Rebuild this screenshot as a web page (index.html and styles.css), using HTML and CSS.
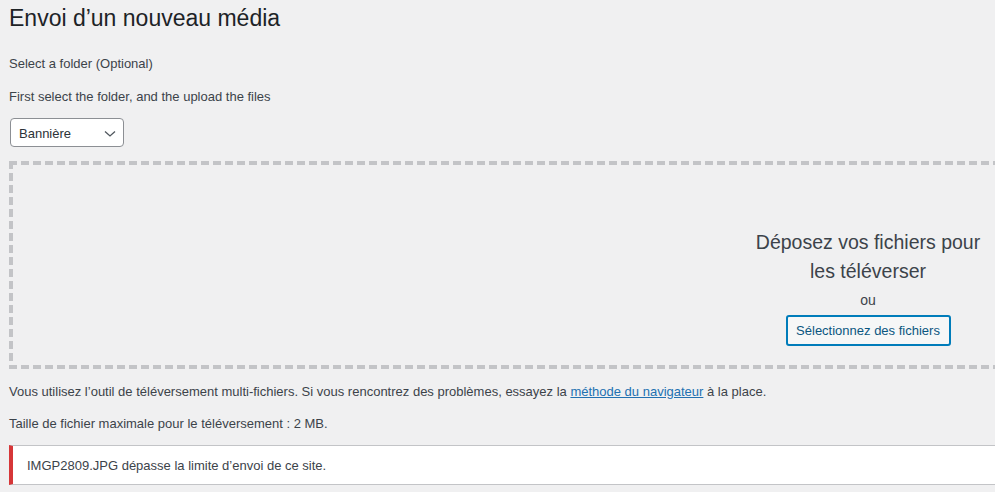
FILE: index.html
```html
<!DOCTYPE html>
<html lang="fr">
<head>
    <meta charset="UTF-8">
    <meta name="viewport" content="width=device-width, initial-scale=1.0">
    <title>Envoi d’un nouveau média</title>
    <link rel="stylesheet" href="styles.css">
</head>
<body>
    <div class="wrap">
        <h1>Envoi d’un nouveau média</h1>

        <p class="folder-label">Select a folder (Optional)</p>
        <p class="folder-help">First select the folder, and the upload the files</p>
        <div class="folder-select">
            <span>Bannière</span>
            <svg class="chevron" width="12" height="6" viewBox="0 0 12 6">
                <path d="M1 0.5 L6 5 L11 0.5" fill="none" stroke="#50575e" stroke-width="1.3"/>
            </svg>
        </div>

        <div class="drop-area">
            <div class="drop-inside">
                <p class="drop-info">Déposez vos fichiers pour les téléverser</p>
                <p class="drop-or">ou</p>
                <p class="drop-buttons"><button type="button" class="browse-button">Sélectionnez des fichiers</button></p>
            </div>
        </div>

        <p class="upload-flash">Vous utilisez l’outil de téléversement multi-fichiers. Si vous rencontrez des problèmes, essayez la <a href="#">méthode du navigateur</a> à la place.</p>
        <p class="max-size">Taille de fichier maximale pour le téléversement : 2 MB.</p>

        <div class="notice-error">IMGP2809.JPG dépasse la limite d’envoi de ce site.</div>
    </div>
</body>
</html>
```
FILE: styles.css
```css
html, body {
    overflow: hidden;
}
body {
    margin: 0;
    background-color: #f0f0f1;
    color: #3c434a;
    font-family: "Liberation Sans", Arial, sans-serif;
    font-size: 13px;
    line-height: 20px;
}
.wrap {
    padding-left: 9px;
    width: 1718px;
}
h1 {
    margin: 0;
    padding-top: 3px;
    font-size: 23px;
    font-weight: 400;
    line-height: 30px;
    color: #1d2327;
}
p {
    margin: 0;
}
.folder-label {
    margin-top: 21px;
}
.folder-help {
    margin-top: 13px;
}
.folder-select {
    display: flex;
    align-items: center;
    justify-content: space-between;
    box-sizing: border-box;
    width: 114px;
    height: 29px;
    margin: 11px 0 0 1px;
    padding: 2px 7px 0 8px;
    background-color: #fff;
    border: 1px solid #8c8f94;
    border-radius: 4px;
    color: #2c3338;
}

/* zone de glisser-déposer */
.drop-area {
    box-sizing: border-box;
    height: 208px;
    margin-top: 14px;
    padding: 4px;
    background:
        repeating-linear-gradient(90deg, #c3c4c7 0 8px, transparent 8px 12px) top left / 100% 4px no-repeat,
        repeating-linear-gradient(90deg, #c3c4c7 0 8px, transparent 8px 12px) bottom left / 100% 4px no-repeat,
        repeating-linear-gradient(180deg, #c3c4c7 0 8px, transparent 8px 12px) top left / 4px 100% no-repeat,
        repeating-linear-gradient(180deg, #c3c4c7 0 8px, transparent 8px 12px) top right / 4px 100% no-repeat;
}
.drop-inside {
    width: 250px;
    margin: 63px auto 0;
    text-align: center;
}
.drop-info {
    font-size: 19.5px;
    line-height: 29px;
}
.drop-or {
    margin-top: 4px;
    font-size: 14px;
    line-height: 20px;
}
.drop-buttons {
    margin-top: 5px;
}
.browse-button {
    box-sizing: border-box;
    width: 165px;
    height: 31px;
    padding: 0;
    background-color: #f6f7f7;
    border: 2px solid #007cba;
    border-radius: 3px;
    color: #0a5680;
    font-family: inherit;
    font-size: 13px;
    cursor: pointer;
}

.upload-flash {
    margin-top: 13px;
}
.upload-flash a {
    color: #2271b1;
}
.max-size {
    margin-top: 12px;
}
.notice-error {
    margin-top: 11px;
    padding: 10px 12px 8px 14px;
    background-color: #fff;
    border: 1px solid #c3c4c7;
    border-left: 4px solid #d63638;
    box-shadow: 0 1px 1px rgba(0, 0, 0, 0.04);
    color: #3c434a;
}
```
